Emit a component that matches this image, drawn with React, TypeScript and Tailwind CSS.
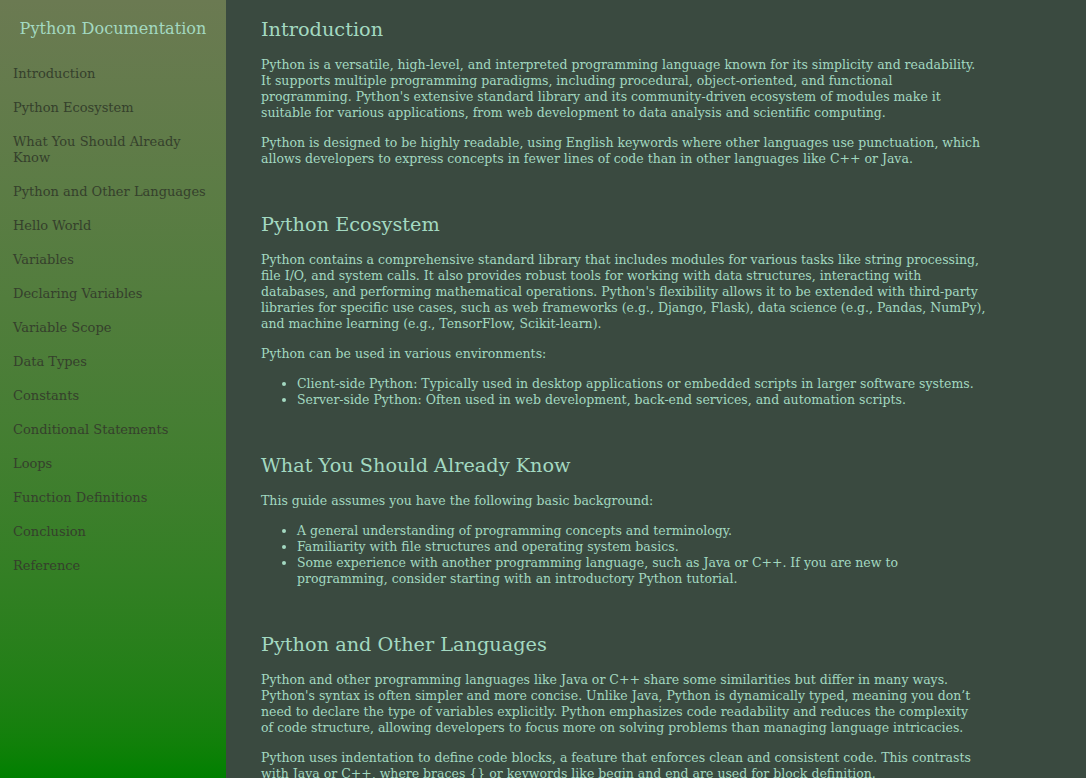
import React from "react";

const nav = [
  "Introduction",
  "Python Ecosystem",
  "What You Should Already Know",
  "Python and Other Languages",
  "Hello World",
  "Variables",
  "Declaring Variables",
  "Variable Scope",
  "Data Types",
  "Constants",
  "Conditional Statements",
  "Loops",
  "Function Definitions",
  "Conclusion",
  "Reference",
];

function H({ children }: { children: React.ReactNode }) {
  return <h2 className="text-[19.3px] leading-[27px] font-normal text-[#a3d9c1] mb-[14px]">{children}</h2>;
}

function P({ children, className = "max-w-[722px]" }: { children: React.ReactNode; className?: string }) {
  return <p className={"mb-[14px] " + className}>{children}</p>;
}

function UL({ items }: { items: string[] }) {
  return (
    <ul className="list-disc pl-[36px] mb-[14px] max-w-[722px]">
      {items.map((t) => (
        <li key={t}>{t}</li>
      ))}
    </ul>
  );
}

const lastPara =
  "Python uses indentation to define code blocks, a feature that enforces clean and consistent code. This contrasts with Java or C++, where braces {} or keywords like begin and end are used for block definition.";

export default function App() {
  return (
    <div
      className="flex h-screen w-full overflow-hidden bg-[#3a4a40]"
      style={{ fontFamily: '"DejaVu Serif", Georgia, serif' }}
    >
      <nav className="w-[226px] shrink-0 h-full bg-gradient-to-b from-[#6b7a52] to-[#008000] pt-[17px]">
        <div className="text-center text-[16.1px] leading-[24px] text-[#a3d9c1] whitespace-nowrap">
          Python Documentation
        </div>
        <ul className="mt-[16px] px-[13px]">
          {nav.map((n) => (
            <li key={n} className="py-[9px] text-[13px] leading-[16px] text-[#35402c]">
              {n}
            </li>
          ))}
        </ul>
      </nav>
      <main className="flex-1 pl-[35px] pt-[16px] text-[12.5px] leading-[16px] text-[#a3d9c1]">
        <div className="max-w-[730px]">
          <section className="mb-[44px]">
            <H>Introduction</H>
            <P>
              Python is a versatile, high-level, and interpreted programming language known for its simplicity and
              readability. It supports multiple programming paradigms, including procedural, object-oriented, and
              functional programming. Python's extensive standard library and its community-driven ecosystem of
              modules make it suitable for various applications, from web development to data analysis and scientific
              computing.
            </P>
            <P>
              Python is designed to be highly readable, using English keywords where other languages use punctuation,
              which allows developers to express concepts in fewer lines of code than in other languages like C++ or
              Java.
            </P>
          </section>
          <section className="mb-[44px]">
            <H>Python Ecosystem</H>
            <P className="max-w-[728px]">
              Python contains a comprehensive standard library that includes modules for various tasks like string
              processing, file I/O, and system calls. It also provides robust tools for working with data structures,
              interacting with databases, and performing mathematical operations. Python's flexibility allows it to be
              extended with third-party libraries for specific use cases, such as web frameworks (e.g., Django,
              Flask), data science (e.g., Pandas, NumPy), and machine learning (e.g., TensorFlow, Scikit-learn).
            </P>
            <P>Python can be used in various environments:</P>
            <UL
              items={[
                "Client-side Python: Typically used in desktop applications or embedded scripts in larger software systems.",
                "Server-side Python: Often used in web development, back-end services, and automation scripts.",
              ]}
            />
          </section>
          <section className="mb-[44px]">
            <H>What You Should Already Know</H>
            <P>This guide assumes you have the following basic background:</P>
            <UL
              items={[
                "A general understanding of programming concepts and terminology.",
                "Familiarity with file structures and operating system basics.",
                "Some experience with another programming language, such as Java or C++. If you are new to programming, consider starting with an introductory Python tutorial.",
              ]}
            />
          </section>
          <section className="mb-[44px]">
            <H>Python and Other Languages</H>
            <P>
              Python and other programming languages like Java or C++ share some similarities but differ in many ways.
              Python's syntax is often simpler and more concise. Unlike Java, Python is dynamically typed, meaning you
              don’t need to declare the type of variables explicitly. Python emphasizes code readability and reduces
              the complexity of code structure, allowing developers to focus more on solving problems than managing
              language intricacies.
            </P>
            <P>{lastPara}</P>
          </section>
        </div>
      </main>
    </div>
  );
}
